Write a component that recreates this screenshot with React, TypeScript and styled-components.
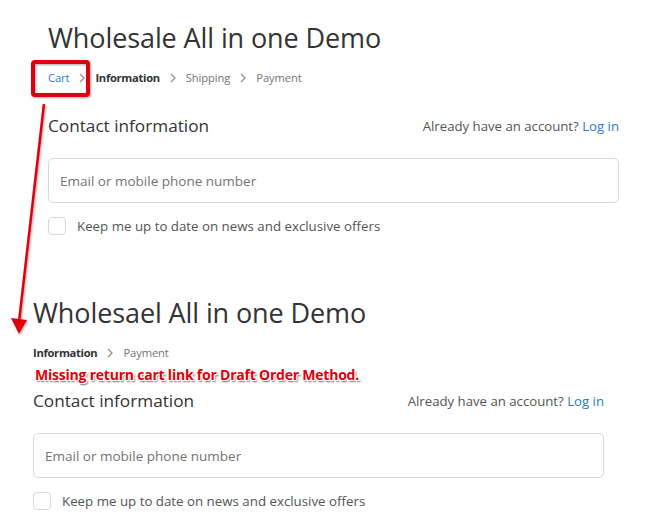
import React from "react";
import styled, { createGlobalStyle } from "styled-components";

const Global = createGlobalStyle`
  html, body { margin: 0; padding: 0; background: #fff; }
  body { font-family: "Open Sans", "Noto Sans", Arial, sans-serif; color: #333; }
`;

const Page = styled.div`
  position: relative;
  width: 657px;
  height: 532px;
  overflow: hidden;
  padding-top: 20px;
  box-sizing: border-box;
`;

const Section = styled.section<{ $left: number; $top?: number }>`
  margin-left: ${(p) => p.$left}px;
  margin-top: ${(p) => p.$top ?? 0}px;
  width: 571px;
  display: flex;
  flex-direction: column;
`;

const Title = styled.h1`
  margin: 0;
  font-size: 27px;
  line-height: 36px;
  font-weight: 400;
  color: #333;
  letter-spacing: -0.1px;
`;

const Crumbs = styled.nav`
  position: relative;
  margin-top: 13px;
  display: flex;
  align-items: center;
  height: 18px;
  font-size: 11.2px;
  line-height: 18px;
`;

const Crumb = styled.span<{ $kind: "link" | "current" | "plain" }>`
  color: ${(p) => (p.$kind === "link" ? "#2a7bc4" : p.$kind === "current" ? "#333" : "#737373")};
  font-weight: ${(p) => (p.$kind === "current" ? 700 : 400)};
  letter-spacing: ${(p) => (p.$kind === "current" ? "-0.3px" : "-0.1px")};
`;

const Chevron = styled.svg`
  width: 10px;
  height: 10px;
  margin: 0 8px;
  flex: none;
`;

const Note = styled.div`
  position: absolute;
  left: 2px;
  top: 22px;
  white-space: nowrap;
  font-size: 14px;
  line-height: 18px;
  font-weight: 700;
  color: #e0000b;
  letter-spacing: -0.22px;
  text-shadow:
    -1px -1px 0 #fff, 1px -1px 0 #fff, -1px 1px 0 #fff, 1px 1px 0 #fff,
    1px 2px 1px #8a8a8a, 2px 2px 2px #9a9a9a;
`;

const HeadRow = styled.div`
  margin-top: 27px;
  display: flex;
  align-items: center;
  justify-content: space-between;
  height: 24px;
`;

const SubTitle = styled.h2`
  margin: 0;
  font-size: 17.2px;
  font-weight: 400;
  line-height: 24px;
  color: #333;
`;

const Account = styled.p`
  margin: 0;
  font-size: 13.2px;
  line-height: 20px;
  color: #545454;
`;

const Link = styled.a`
  color: #2a7bc4;
  text-decoration: none;
`;

const Field = styled.div`
  margin-top: 20px;
  height: 45px;
  box-sizing: border-box;
  border: 1px solid #d9d9d9;
  border-radius: 5px;
  display: flex;
  align-items: center;
  padding-left: 11px;
  font-size: 13.5px;
  color: #737373;
`;

const CheckRow = styled.label`
  margin-top: 14px;
  display: flex;
  align-items: center;
  gap: 11px;
  height: 18px;
  font-size: 13.3px;
  color: #545454;
`;

const Box = styled.span`
  width: 18px;
  height: 18px;
  box-sizing: border-box;
  border: 1px solid #d9d9d9;
  border-radius: 4px;
  background: #fff;
  flex: none;
`;

const Overlay = styled.svg`
  position: absolute;
  left: 0;
  top: 0;
  pointer-events: none;
`;

const ChevronIcon = () => (
  <Chevron viewBox="0 0 10 10">
    <path d="M3 1l4 4-4 4" fill="none" stroke="#919191" strokeWidth="1.3" />
  </Chevron>
);

type Step = { label: string; kind: "link" | "current" | "plain" };

const Checkout: React.FC<{ title: string; steps: Step[]; left: number; top?: number; note?: string }> = ({
  title,
  steps,
  left,
  top,
  note,
}) => (
  <Section $left={left} $top={top}>
    <Title>{title}</Title>
    <Crumbs>
      {steps.map((s, i) => (
        <React.Fragment key={s.label}>
          {i > 0 && <ChevronIcon />}
          <Crumb $kind={s.kind}>{s.label}</Crumb>
        </React.Fragment>
      ))}
      {note && <Note>{note}</Note>}
    </Crumbs>
    <HeadRow>
      <SubTitle>Contact information</SubTitle>
      <Account>
        Already have an account? <Link href="#">Log in</Link>
      </Account>
    </HeadRow>
    <Field>Email or mobile phone number</Field>
    <CheckRow>
      <Box />
      Keep me up to date on news and exclusive offers
    </CheckRow>
  </Section>
);

export default function App() {
  return (
    <>
      <Global />
      <Page>
        <Checkout
          title="Wholesale All in one Demo"
          left={48}
          steps={[
            { label: "Cart", kind: "link" },
            { label: "Information", kind: "current" },
            { label: "Shipping", kind: "plain" },
            { label: "Payment", kind: "plain" },
          ]}
        />
        <Checkout
          title="Wholesael All in one Demo"
          left={33}
          top={60}
          steps={[
            { label: "Information", kind: "current" },
            { label: "Payment", kind: "plain" },
          ]}
          note="Missing return cart link for Draft Order Method."
        />
        <Overlay width="657" height="532" viewBox="0 0 657 532">
          <defs>
            <filter id="sh" x="-20%" y="-20%" width="140%" height="140%">
              <feDropShadow dx="1" dy="1" stdDeviation="1" floodColor="#000" floodOpacity="0.35" />
            </filter>
          </defs>
          <rect x="33" y="62" width="55" height="33" rx="2" fill="none" stroke="#e0000b" strokeWidth="4" filter="url(#sh)" />
          <g filter="url(#sh)">
            <path d="M44 104 L19 322" stroke="#e0000b" strokeWidth="2.5" fill="none" />
            <path d="M11 318 L19 334 L27 320 Z" fill="#e0000b" />
          </g>
        </Overlay>
      </Page>
    </>
  );
}
